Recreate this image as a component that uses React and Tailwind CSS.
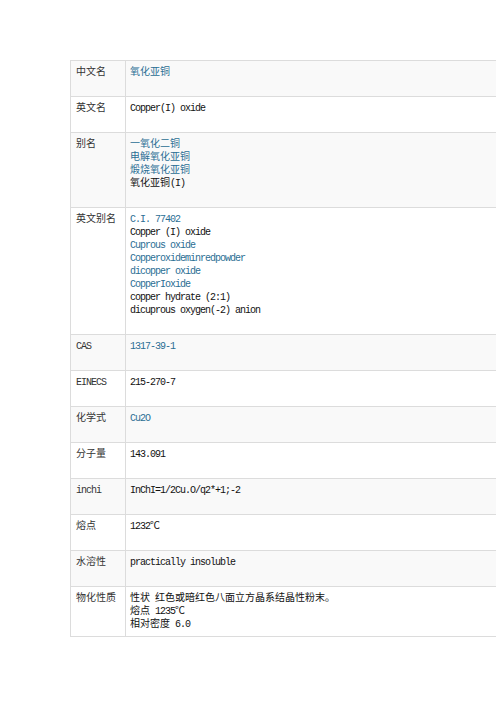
const LINK = 'text-[#2b6e94]'

// latin text in the SimSun-like half-width style
function L({ children, link }) {
  return <span className={`tracking-[-1px] ${link ? LINK : ''}`}>{children}</span>
}

function C({ children, link }) {
  return <span className={link ? LINK : ''}>{children}</span>
}

const rows = [
  { label: '中文名', lines: [<C link>氧化亚铜</C>] },
  { label: '英文名', lines: [<L>Copper(I) oxide</L>] },
  {
    label: '别名',
    lines: [
      <C link>一氧化二铜</C>,
      <C link>电解氧化亚铜</C>,
      <C link>煅烧氧化亚铜</C>,
      <><C>氧化亚铜</C><L>(I)</L></>,
    ],
  },
  {
    label: '英文别名',
    lines: [
      <L link>C.I. 77402</L>,
      <L>Copper (I) oxide</L>,
      <L link>Cuprous oxide</L>,
      <L link>Copperoxideminredpowder</L>,
      <L link>dicopper oxide</L>,
      <L link>CopperIoxide</L>,
      <L>copper hydrate (2:1)</L>,
      <L>dicuprous oxygen(-2) anion</L>,
    ],
  },
  { label: <L>CAS</L>, lines: [<L link>1317-39-1</L>] },
  { label: <L>EINECS</L>, lines: [<L>215-270-7</L>] },
  { label: '化学式', lines: [<L link>Cu2O</L>] },
  { label: '分子量', lines: [<L>143.091</L>] },
  { label: <L>inchi</L>, lines: [<L>InChI=1/2Cu.O/q2*+1;-2</L>] },
  { label: '熔点', lines: [<><L>1232</L><C>℃</C></>] },
  { label: '水溶性', lines: [<L>practically insoluble</L>] },
  {
    label: '物化性质',
    lines: [
      <><C>性状</C><L> </L><C>红色或暗红色八面立方晶系结晶性粉末。</C></>,
      <><C>熔点</C><L> 1235</L><C>℃</C></>,
      <><C>相对密度</C><L> 6.0</L></>,
    ],
    last: true,
  },
]

export default function App() {
  return (
    <div className="w-[496px] h-[702px] overflow-hidden bg-white">
      <div className="mt-[60px] ml-[70px] w-[460px] border-t border-l border-[#dcdcdc] font-['Liberation_Mono','Noto_Sans_CJK_SC',monospace] text-[10px] leading-[13px]">
        {rows.map((row, i) => (
          <div
            key={i}
            className={`flex border-b border-[#dcdcdc] ${i % 2 === 0 ? 'bg-[#f9f9f9]' : 'bg-white'}`}
          >
            <div className={`w-[55px] shrink-0 border-r border-[#dcdcdc] pl-[5px] pt-[5px] text-[#333] ${row.last ? 'pb-[5px]' : 'pb-[17px]'}`}>
              <div className="h-[13px] whitespace-pre">{row.label}</div>
            </div>
            <div className={`flex-1 pl-[4px] pt-[5px] text-[#111] ${row.last ? 'pb-[5px]' : 'pb-[17px]'}`}>
              {row.lines.map((line, j) => (
                <div key={j} className="h-[13px] whitespace-pre">{line}</div>
              ))}
            </div>
          </div>
        ))}
      </div>
    </div>
  )
}
